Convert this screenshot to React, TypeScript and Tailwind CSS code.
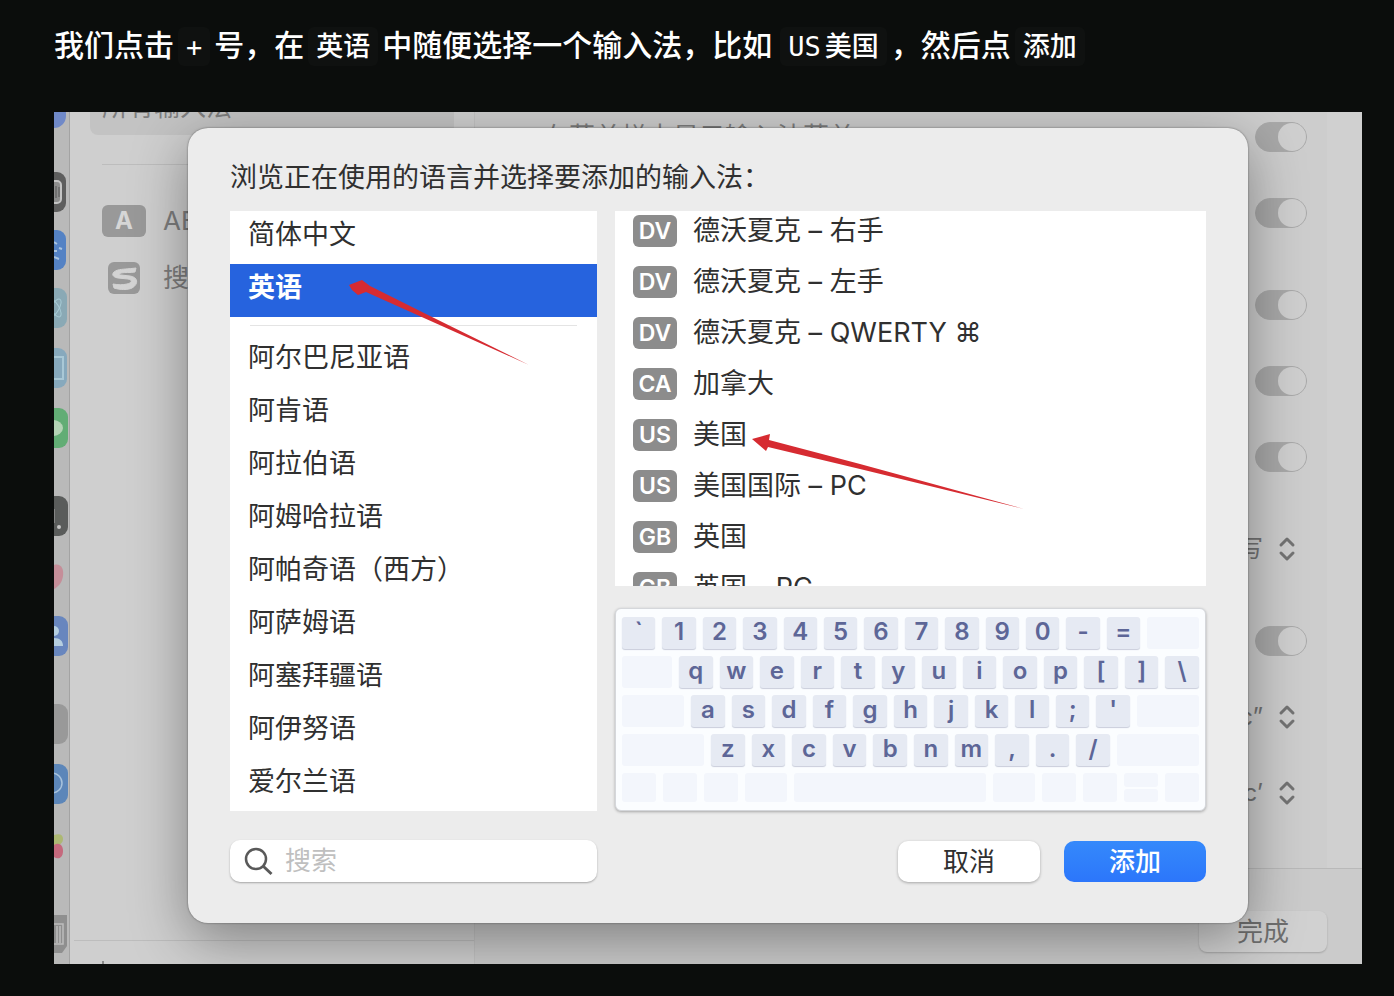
import { useState } from "react";
import type { ReactNode } from "react";
import { ChevronDown, ChevronUp } from "lucide-react";

const languages = [
  "阿尔巴尼亚语",
  "阿肯语",
  "阿拉伯语",
  "阿姆哈拉语",
  "阿帕奇语（西方）",
  "阿萨姆语",
  "阿塞拜疆语",
  "阿伊努语",
  "爱尔兰语",
];

const sources = [
  { code: "DV", name: "德沃夏克 – 右手" },
  { code: "DV", name: "德沃夏克 – 左手" },
  { code: "DV", name: "德沃夏克 – QWERTY ⌘" },
  { code: "CA", name: "加拿大" },
  { code: "US", name: "美国" },
  { code: "US", name: "美国国际 – PC" },
  { code: "GB", name: "英国" },
  { code: "GB", name: "英国 – PC" },
];

const keyRows = [
  { left: "", keys: "`1234567890-=", right: "w-[52px]" },
  { left: "w-[50px]", keys: "qwertyuiop[]\\", right: "" },
  { left: "w-[62px]", keys: "asdfghjkl;'", right: "w-[62px]" },
  { left: "w-[82px]", keys: "zxcvbnm,./", right: "w-[82px]" },
];

function Code({ children, className = "mx-1" }: { children: ReactNode; className?: string }) {
  return (
    <code
      className={`${className} rounded-md bg-[#0f1110] px-2 py-1 font-['DejaVu_Sans_Mono','Noto_Sans_CJK_SC',monospace] text-[27px]`}
    >
      {children}
    </code>
  );
}

function Dock() {
  return (
    <div className="flex w-4 shrink-0 flex-col border-r border-[#a3a3a3] bg-[#b9b9b9]">
      <div className="h-4 w-3 rounded-br-xl bg-[#7089c8]" />
      {/* keychain */}
      <svg className="mt-11 h-10 w-[13px]" viewBox="0 0 13 40">
        <rect x="-27" width="39" height="40" rx="9" fill="#5e5e5e" />
        <rect x="-10" y="9" width="17" height="22" rx="4" fill="#8e8e8e" stroke="#c4c4c4" strokeWidth="2" />
        <path d="M2 14v12M5 15v10" stroke="#555" />
      </svg>
      {/* app store */}
      <svg className="mt-[18px] h-10 w-[13px]" viewBox="0 0 13 40">
        <rect x="-27" width="39" height="40" rx="9" fill="#5482c4" />
        <path d="M0 12l3 2M5 18l3 1M0 21h3M0 27l5 2" stroke="#a9c3df" strokeWidth="2" />
      </svg>
      {/* react tool */}
      <svg className="mt-[18px] h-10 w-[14px]" viewBox="0 0 14 40">
        <rect x="-27" width="40" height="40" rx="9" fill="#8aa9b5" />
        <ellipse cx="1" cy="20" rx="10" ry="4" fill="none" stroke="#a8cbd5" transform="rotate(60 1 20)" />
        <ellipse cx="1" cy="20" rx="10" ry="4" fill="none" stroke="#a8cbd5" transform="rotate(-60 1 20)" />
      </svg>
      {/* finder style window */}
      <svg className="mt-5 h-10 w-[14px]" viewBox="0 0 14 40">
        <rect x="-27" width="40" height="40" rx="9" fill="#87a9bd" />
        <path d="M0 9h9v22H0" fill="none" stroke="#a9c8d6" strokeWidth="2" />
      </svg>
      {/* wechat */}
      <svg className="mt-5 h-10 w-[14px]" viewBox="0 0 14 40">
        <rect x="-27" width="41" height="40" rx="9" fill="#62ad75" />
        <ellipse cx="-2" cy="20" rx="11" ry="8" fill="#b4d3b5" />
      </svg>
      {/* terminal */}
      <svg className="mt-12 h-10 w-[14px]" viewBox="0 0 14 40">
        <rect x="-27" width="41" height="40" rx="9" fill="#5a5c5b" />
        <path d="M0 13v14" stroke="#858585" strokeWidth="2" />
        <circle cx="5" cy="31" r="2" fill="#c5c5c5" />
      </svg>
      {/* music */}
      <svg className="mt-5 h-10 w-[14px]" viewBox="0 0 14 40">
        <path d="M0 9c7-2 10 4 9 11s-5 11-9 13z" fill="#c58e99" />
      </svg>
      {/* contacts */}
      <svg className="mt-5 h-10 w-[14px]" viewBox="0 0 14 40">
        <rect x="-27" width="41" height="40" rx="9" fill="#6886be" />
        <circle cx="0" cy="15" r="5" fill="#b5cee0" />
        <path d="M0 22c6 0 9 3 9 8H0z" fill="#b5cee0" />
      </svg>
      {/* system settings */}
      <svg className="mt-12 h-10 w-[14px]" viewBox="0 0 14 40">
        <rect x="-27" width="41" height="40" rx="9" fill="#999999" />
      </svg>
      {/* safari */}
      <svg className="mt-5 h-10 w-[14px]" viewBox="0 0 14 40">
        <rect x="-27" width="41" height="40" rx="9" fill="#5c86b9" />
        <circle cx="-2" cy="19" r="10" fill="none" stroke="#a7c2dc" strokeWidth="1.5" />
      </svg>
      {/* photos */}
      <svg className="mt-5 h-10 w-[14px]" viewBox="0 0 14 40">
        <path d="M0 11c6-2 9 0 9 4s-4 7-9 6z" fill="#adb873" />
        <path d="M0 21c5-3 9 0 9 6 0 7-5 9-9 6z" fill="#c5697d" />
      </svg>
      {/* trash */}
      <svg className="mt-[50px] h-10 w-[14px]" viewBox="0 0 14 40">
        <path d="M0 1h13v31l-5 7H0z" fill="#8f8f8f" />
        <path d="M0 10h9v20H0M3 12v17M6 12v17" fill="none" stroke="#bdbdbd" strokeWidth="1.5" />
      </svg>
    </div>
  );
}

function Sidebar() {
  return (
    <aside className="flex w-[405px] shrink-0 flex-col border-r border-[#c3c3c3] bg-[#cfcfcf] text-[26px] leading-8 text-[#7d7d7d]">
      <div className="mx-5 flex h-[23px] items-end rounded-b-lg bg-[#c3c3c3] pb-3 pl-3">所有输入法</div>
      <hr className="ml-8 mr-5 mt-[29px] border-[#bdbdbd]" />
      <ul className="mt-10 flex flex-col gap-[25px] pl-8">
        <li className="flex h-8 items-center gap-[17px]">
          <span className="flex h-8 w-11 items-center justify-center rounded-md bg-[#999] text-2xl font-bold text-[#d6d6d6]">
            A
          </span>
          ABC
        </li>
        <li className="flex h-8 items-center gap-[17px]">
          <span className="flex w-11 justify-center">
            <svg className="size-8" viewBox="0 0 32 32">
              <rect width="32" height="32" rx="6" fill="#999" />
              <path
                d="M28 6C20 7 14 7 10 8c-7 2-7 7 0 8l10 1c5 1 4 4-1 5-4 1-9 1-14 0l1 4c6 2 14 2 18 0 7-4 6-11-2-12l-9-1c-2 0-2-1 0-2 4-1 9 0 14-1z"
                fill="#d3d3d3"
                stroke="#d3d3d3"
              />
            </svg>
          </span>
          搜狗
        </li>
      </ul>
      <div className="ml-1 mt-auto h-6 border-t border-[#bdbdbd] pl-7">
        <div className="mt-5 h-1 w-0.5 bg-[#8a8a8a]" />
      </div>
    </aside>
  );
}

function Toggle({ label }: { label: string }) {
  const [on, setOn] = useState(true);
  return (
    <button
      type="button"
      role="switch"
      aria-checked={on}
      aria-label={label}
      onClick={() => setOn(!on)}
      className={`flex h-[30px] w-[52px] items-center rounded-full border border-[#a9a9a9] bg-[#a8a8a8] ${
        on ? "justify-end" : "justify-start"
      }`}
    >
      <span className="size-7 rounded-full bg-[#cfcfcf]" />
    </button>
  );
}

function Picker({ value }: { value: string }) {
  return (
    <button type="button" className="flex h-[30px] items-center gap-3 pr-2 text-2xl text-[#737373]">
      {value}
      <span className="flex flex-col">
        <ChevronUp size={24} strokeWidth={3} className="-mb-2.5" />
        <ChevronDown size={24} strokeWidth={3} />
      </span>
    </button>
  );
}

function Preferences() {
  return (
    <section className="flex flex-1 flex-col bg-[#d0d0d0]">
      <div className="mr-[35px] flex-1 bg-[#cdcdcd] pr-5 pt-2.5">
        <div className="flex flex-col items-end">
          <div className="flex w-full items-center justify-between pl-[68px]">
            <span className="whitespace-nowrap text-[26px] leading-[30px] text-[#7d7d7d]">在菜单栏中显示输入法菜单</span>
            <Toggle label="在菜单栏中显示输入法菜单" />
          </div>
          <div className="mt-[46px]"><Toggle label="自动切换输入法" /></div>
          <div className="mt-[62px]"><Toggle label="自动纠正拼写" /></div>
          <div className="mt-[46px]"><Toggle label="自动大写字词的首字母" /></div>
          <div className="mt-[46px]"><Toggle label="连按两下空格键插入句号" /></div>
          <div className="mt-[62px]"><Picker value="拼写" /></div>
          <div className="mt-[62px]"><Toggle label="使用智能引号和破折号" /></div>
          <div className="mt-[46px]"><Picker value="“abc”" /></div>
          <div className="mt-[46px]"><Picker value="‘abc’" /></div>
        </div>
      </div>
      <div className="flex h-24 items-end justify-end border-t border-[#b9b9b9] bg-[#cbcbcb] pb-3 pr-[35px]">
        <button
          type="button"
          className="h-[41px] w-32 rounded-lg bg-[#d1d1d1] text-[26px] leading-8 text-[#6f6f6f] shadow-[0_1px_2px_rgba(0,0,0,0.2)]"
        >
          完成
        </button>
      </div>
    </section>
  );
}

function Key({ children, className = "" }: { children?: ReactNode; className?: string }) {
  return (
    <kbd
      className={`flex items-center justify-center rounded-[3px] font-['Inter','Liberation_Sans',sans-serif] text-2xl font-semibold leading-6 text-[#5d6697] ${
        children ? "min-w-0 flex-1 bg-[#e6eaf3] pb-0.5 shadow-[0_1px_1px_#c9cddb]" : "bg-[#f3f6fc]"
      } ${className}`}
    >
      {children}
    </kbd>
  );
}

function Keyboard() {
  return (
    <div className="flex flex-col gap-[7px] rounded-md border border-[#d5d7db] bg-[#fbfdff] px-1.5 py-2 shadow-[0_1px_3px_rgba(0,0,0,0.3)]">
      {keyRows.map((row) => (
        <div key={row.keys} className="flex h-8 gap-[7px]">
          {row.left && <Key className={row.left} />}
          {row.keys.split("").map((k) => (
            <Key key={k}>{k}</Key>
          ))}
          {row.right && <Key className={row.right} />}
        </div>
      ))}
      <div className="flex h-[29px] gap-[7px]">
        <Key className="w-[34px]" />
        <Key className="w-[34px]" />
        <Key className="w-[34px]" />
        <Key className="w-[42px]" />
        <Key className="flex-1" />
        <Key className="w-[42px]" />
        <Key className="w-[34px]" />
        <Key className="w-[34px]" />
        <span className="flex w-[34px] flex-col gap-0.5">
          <Key className="flex-1" />
          <Key className="flex-1" />
        </span>
        <Key className="w-[34px]" />
      </div>
    </div>
  );
}

function LanguageRow({ name, active, onSelect }: { name: string; active: boolean; onSelect: () => void }) {
  return (
    <li>
      <button
        type="button"
        onClick={onSelect}
        className={`flex h-[53px] w-full items-center whitespace-nowrap pb-1.5 pl-[18px] text-left ${
          active ? "bg-[#2663de] font-bold text-white" : ""
        }`}
      >
        {name}
      </button>
    </li>
  );
}

function AddSourceDialog() {
  const [selected, setSelected] = useState("英语");

  return (
    <div
      role="dialog"
      aria-labelledby="dialog-title"
      className="relative mb-[41px] ml-[134px] mr-[114px] mt-4 rounded-[20px] bg-[#ececec] px-[42px] pb-[41px] pt-8 text-[27px] leading-9 text-[#303030] shadow-[0_0_2px_rgba(0,0,0,0.5),0_16px_56px_rgba(0,0,0,0.38)]"
    >
      <h2 id="dialog-title" className="whitespace-nowrap">浏览正在使用的语言并选择要添加的输入法：</h2>

      <div className="relative mt-[15px] grid grid-cols-[367fr_591fr] gap-[18px]">
        <div className="bg-white">
          <ul>
            {["简体中文", "英语"].map((name) => (
              <LanguageRow key={name} name={name} active={selected === name} onSelect={() => setSelected(name)} />
            ))}
          </ul>
          <hr className="mx-5 my-2 border-[#e4e4e4]" />
          <ul>
            {languages.map((name) => (
              <LanguageRow key={name} name={name} active={selected === name} onSelect={() => setSelected(name)} />
            ))}
          </ul>
        </div>

        <div className="flex flex-col justify-between">
          <ul className="h-[375px] overflow-hidden bg-white">
            {sources.map((source) => (
              <li key={source.name} className="flex h-[51px] items-start gap-4 pl-[18px] pt-1">
                <span className="flex h-8 w-11 shrink-0 items-center justify-center rounded-md bg-[#8c8c8c] text-[23px] font-semibold text-white">
                  {source.code}
                </span>
                <span className="whitespace-nowrap leading-8">{source.name}</span>
              </li>
            ))}
          </ul>
          <Keyboard />
        </div>

        {/* Hint arrows */}
        <svg className="pointer-events-none absolute left-0 top-0 h-[320px] w-[800px]" viewBox="0 0 800 320">
          <path d="M119 74l13-5 8 6 58 29 101 50-105-47-58-26-8 3-6-5z" fill="#d62b31" />
          <path d="M522 228l18-5-1 6 91 24 164 45-164-40-92-22-2 4z" fill="#d62b31" />
        </svg>
      </div>

      <div className="mt-[29px] grid grid-cols-[367fr_591fr] gap-[18px]">
        <label className="flex h-[42px] items-center gap-[11px] rounded-[10px] bg-white pl-3.5 shadow-[0_1px_2px_rgba(0,0,0,0.3)]">
          <svg className="size-[30px] shrink-0" viewBox="0 0 30 30" fill="none" stroke="#595959">
            <circle cx="12" cy="13" r="10" strokeWidth="2.5" />
            <path d="M19 20l8.500 8" strokeWidth="3" />
          </svg>
          <input
            type="text"
            aria-label="搜索"
            placeholder="搜索"
            className="w-full min-w-0 bg-transparent text-[26px] leading-8 outline-none placeholder:text-[#bfbfbf]"
          />
        </label>
        <div className="flex items-end justify-end gap-6 text-[26px] leading-8">
          <button type="button" className="h-[41px] w-[142px] rounded-[10px] bg-white shadow-[0_1px_3px_rgba(0,0,0,0.3)]">
            取消
          </button>
          <button
            type="button"
            className="h-[41px] w-[142px] rounded-[10px] bg-gradient-to-b from-[#3589fb] to-[#2c76fb] font-medium text-white"
          >
            添加
          </button>
        </div>
      </div>
    </div>
  );
}

export default function App() {
  return (
    <main className="min-h-screen bg-[#0b0d0c] pb-[33px] pl-[54px] pr-8 pt-5 font-['Inter','Noto_Sans_CJK_SC',sans-serif]">
      <p className="mb-10 text-[30px] font-medium leading-[50px] text-white">
        我们点击<Code>+</Code>号，在<Code>英语</Code>中随便选择一个输入法，比如
        <Code className="ml-2 mr-1">
          US<span className="ml-1">美国</span>
        </Code>
        ，然后点<Code>添加</Code>
      </p>

      <div className="relative flow-root overflow-hidden">
        <div className="absolute inset-0 flex">
          <Dock />
          <Sidebar />
          <Preferences />
        </div>
        <AddSourceDialog />
      </div>
    </main>
  );
}
